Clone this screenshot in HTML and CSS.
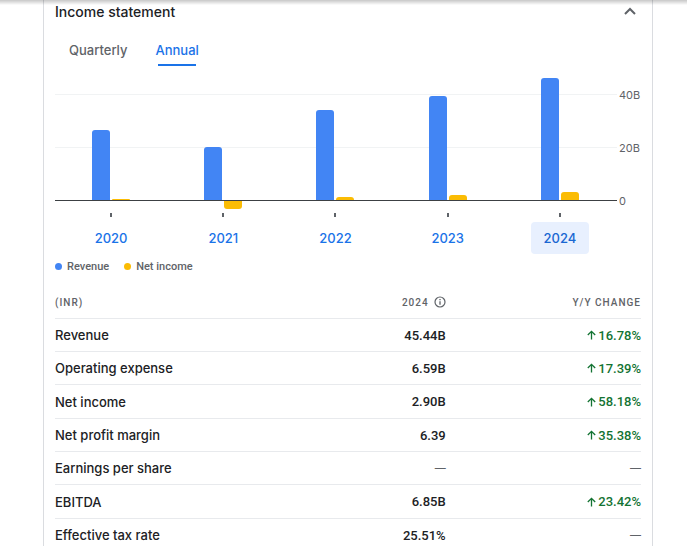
FILE: index.html
```html
<!DOCTYPE html>
<html lang="en">
<head>
<meta charset="utf-8">
<meta name="viewport" content="width=device-width, initial-scale=1">
<title>Income statement</title>
<link rel="stylesheet" href="styles.css">
</head>
<body>
<main class="card">
  <header class="card-head">
    <h2 class="title">Income statement</h2>
    <button class="collapse" type="button" aria-label="Collapse">
      <svg width="12" height="8" viewBox="0 0 12 8" fill="none" stroke="#5f6368" stroke-width="2"><path d="M1 7l5-5 5 5"/></svg>
    </button>
  </header>

  <nav class="tabs">
    <button class="tab" type="button">Quarterly</button>
    <button class="tab active" type="button">Annual</button>
  </nav>

  <section class="chart">
    <div class="scale">
      <div class="level"><span>40B</span></div>
      <div class="level"><span>20B</span></div>
      <div class="level zero"><span>0</span></div>
    </div>
    <div class="groups">
      <div class="group"><i class="bar revenue" style="height:70px"></i><i class="bar income" style="height:1px"></i></div>
      <div class="group"><i class="bar revenue" style="height:53px"></i><i class="bar income negative" style="height:8px"></i></div>
      <div class="group"><i class="bar revenue" style="height:90px"></i><i class="bar income" style="height:3px"></i></div>
      <div class="group"><i class="bar revenue" style="height:104px"></i><i class="bar income" style="height:5px"></i></div>
      <div class="group"><i class="bar revenue" style="height:122px"></i><i class="bar income" style="height:8px"></i></div>
    </div>
  </section>

  <div class="years">
    <button class="year" type="button">2020</button>
    <button class="year" type="button">2021</button>
    <button class="year" type="button">2022</button>
    <button class="year" type="button">2023</button>
    <button class="year selected" type="button">2024</button>
  </div>

  <div class="legend">
    <span class="key revenue-key">Revenue</span>
    <span class="key income-key">Net income</span>
  </div>

  <table class="figures">
    <thead>
      <tr>
        <th scope="col">(INR)</th>
        <th scope="col"><span class="with-icon">2024
          <svg width="12" height="12" viewBox="0 0 12 12" fill="none" stroke="#5f6368"><circle cx="6" cy="6" r="5" stroke-width="1.2"/><path d="M6 5.2v3.6M6 3v1.3" stroke-width="1.3"/></svg></span></th>
        <th scope="col">Y/Y change</th>
      </tr>
    </thead>
    <tbody>
      <tr><td>Revenue</td><td>45.44B</td><td><span class="up"><svg width="9" height="10" viewBox="0 0 9 10"><path d="M4.5 9.5V1.5M.8 5l3.7-3.7L8.2 5"/></svg>16.78%</span></td></tr>
      <tr><td>Operating expense</td><td>6.59B</td><td><span class="up"><svg width="9" height="10" viewBox="0 0 9 10"><path d="M4.5 9.5V1.5M.8 5l3.7-3.7L8.2 5"/></svg>17.39%</span></td></tr>
      <tr><td>Net income</td><td>2.90B</td><td><span class="up"><svg width="9" height="10" viewBox="0 0 9 10"><path d="M4.5 9.5V1.5M.8 5l3.7-3.7L8.2 5"/></svg>58.18%</span></td></tr>
      <tr><td>Net profit margin</td><td>6.39</td><td><span class="up"><svg width="9" height="10" viewBox="0 0 9 10"><path d="M4.5 9.5V1.5M.8 5l3.7-3.7L8.2 5"/></svg>35.38%</span></td></tr>
      <tr><td>Earnings per share</td><td class="none">—</td><td class="none">—</td></tr>
      <tr><td>EBITDA</td><td>6.85B</td><td><span class="up"><svg width="9" height="10" viewBox="0 0 9 10"><path d="M4.5 9.5V1.5M.8 5l3.7-3.7L8.2 5"/></svg>23.42%</span></td></tr>
      <tr><td>Effective tax rate</td><td>25.51%</td><td class="none">—</td></tr>
    </tbody>
  </table>
</main>
</body>
</html>
```
FILE: styles.css
```css
* {
  box-sizing: border-box;
}

body {
  margin: 0;
  background: #fff;
  color: #202124;
  font-family: Inter, Roboto, sans-serif;
  font-size: 13px;
  overflow: hidden;
}

/* Shadow cast by the page bar above the scrolled content. */
body::before {
  content: "";
  position: fixed;
  inset: 0 0 auto;
  height: 5px;
  background: linear-gradient(rgba(0, 0, 0, 0.22), rgba(0, 0, 0, 0));
}

button {
  border: 0;
  padding: 0;
  background: none;
  font: inherit;
  cursor: pointer;
}

.card {
  min-height: 100vh;
  margin: 0 34px 0 43px;
  padding: 0 11px;
  border: solid #dadce0;
  border-width: 0 1px;
}

.card-head {
  display: flex;
  align-items: center;
  justify-content: space-between;
  height: 22px;
}

.title {
  margin: 0;
  font-size: 14px;
  font-weight: 500;
}

.collapse {
  display: flex;
  padding: 0 5px;
}

.tabs {
  display: flex;
  gap: 28px;
  height: 44px;
  padding: 13px 14px 0;
}

.tab {
  display: flex;
  flex-direction: column;
  align-items: center;
  justify-content: space-between;
  padding-top: 7px;
  color: #5f6368;
  font-weight: 500;
}

.active {
  color: #1a73e8;
}

.active::after {
  content: "";
  width: 38px;
  height: 2px;
  background: #1a73e8;
}

.chart {
  position: relative;
  height: 151px;
  padding-top: 2px;
}

.level {
  display: flex;
  align-items: center;
  height: 53px;
  gap: 2px;
  color: #5f6368;
  font-size: 11px;
}

.level::before {
  content: "";
  flex: 1;
  height: 1px;
  background: #f1f3f4;
}

.level span {
  width: 22px;
}

.zero::before {
  background: #3c4043;
}

/* Bars are drawn over the scale and stop at its zero line. */
.groups {
  position: absolute;
  inset: 4px 25px 0 0;
  display: grid;
  grid-template-columns: repeat(5, 1fr);
}

.group {
  display: flex;
  align-items: flex-end;
  justify-content: center;
  gap: 2px;
  padding-bottom: 17px;
  background: linear-gradient(#5f6368, #5f6368) center bottom / 2px 4px no-repeat;
}

.bar {
  width: 18px;
  border-radius: 3px 3px 0 0;
}

.revenue {
  background: #4285f4;
}

.income {
  background: #fbbc04;
}

.negative {
  margin-bottom: -9px;
  border-radius: 0 0 3px 3px;
}

.years {
  display: grid;
  grid-template-columns: repeat(5, 1fr);
  justify-items: center;
  margin: 5px 25px 0 0;
}

.year {
  width: 58px;
  height: 32px;
  border-radius: 4px;
  color: #1a73e8;
  font-weight: 500;
}

.selected {
  background: #e8f0fe;
  color: #1967d2;
}

.legend {
  display: flex;
  gap: 15px;
  height: 24px;
  color: #5f6368;
  font-family: Roboto, sans-serif;
  font-size: 11px;
  font-weight: 500;
}

.key {
  display: flex;
  align-items: center;
  gap: 5px;
}

.key::before {
  content: "";
  width: 7px;
  height: 7px;
  border-radius: 50%;
}

.revenue-key::before {
  background: #4285f4;
}

.income-key::before {
  background: #fbbc04;
}

.figures {
  width: 100%;
  margin-top: 8px;
  border-collapse: separate;
  border-spacing: 0;
  table-layout: fixed;
}

th {
  height: 32px;
  padding: 0;
  color: #5f6368;
  font-family: Roboto, sans-serif;
  font-size: 10px;
  font-weight: 500;
  letter-spacing: 1px;
  text-align: right;
  text-transform: uppercase;
}

td {
  height: 33px;
  padding: 0;
  border-top: 1px solid #e8eaed;
  font-family: Roboto, sans-serif;
  font-weight: 500;
  text-align: right;
}

tr:nth-child(3n) td {
  height: 34px;
}

th:first-child,
td:first-child {
  text-align: left;
}

td:first-child {
  font-family: Inter, Roboto, sans-serif;
}

.with-icon {
  display: flex;
  align-items: center;
  justify-content: flex-end;
  gap: 5px;
}

.up {
  display: flex;
  align-items: center;
  justify-content: flex-end;
  gap: 2px;
  color: #137333;
}

.up svg {
  fill: none;
  stroke: #137333;
  stroke-width: 1.3;
}

td.none {
  color: #5f6368;
  font-family: Inter, Roboto, sans-serif;
  font-size: 11px;
}
```
